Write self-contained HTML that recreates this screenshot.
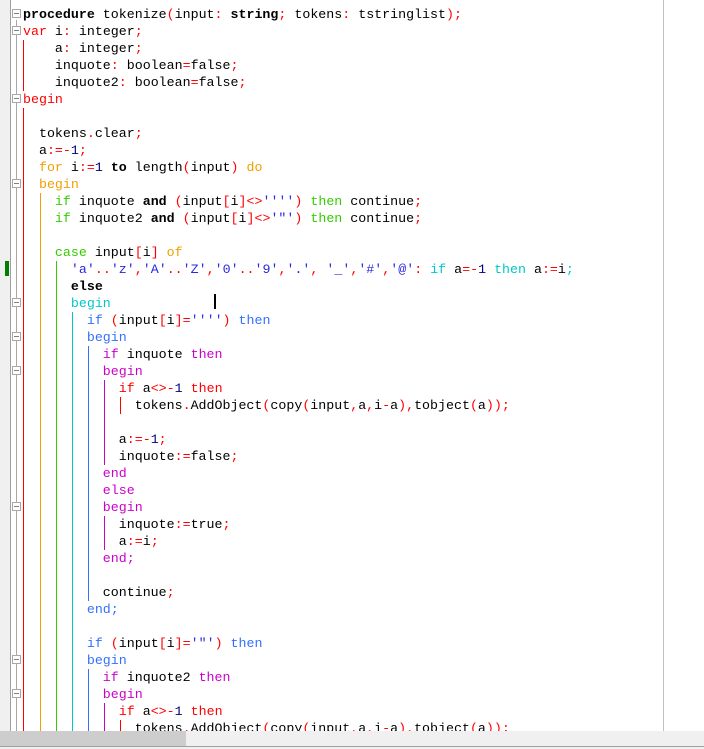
<!DOCTYPE html>
<html><head><meta charset="utf-8"><style>
html,body{margin:0;padding:0;background:#fff;width:704px;height:749px;overflow:hidden;position:relative}
.g{position:absolute;left:0;top:0;width:10px;height:731px;background:#f0f0f0;border-right:1px solid #a0a0a0}
.fl{position:absolute;left:16px;width:1px;background:#a8a8a8}
.fb{position:absolute;left:12px;width:7px;height:7px;border:1px solid #a8a8a8;background:#fff}
.fb:after{content:"";position:absolute;left:1px;top:3px;width:5px;height:1px;background:#808080}
.code{position:absolute;left:23px;top:6px;font-family:"Liberation Mono",monospace;font-size:13.3px;line-height:17px;white-space:pre;color:#000}
.v{position:absolute;width:1px}
.k{font-weight:bold}
.s{color:#ff0000}.n{color:#000080}.t{color:#2828e0}
.c1{color:#ff0000}.c2{color:#f0a000}.c3{color:#33cc00}.c4{color:#00c8c8}.c5{color:#3370ff}.c6{color:#cc00cc}.c7{color:#ff0000}
.sb{position:absolute;left:0;top:731px;width:704px;height:15px;background:#f0f0f0}
.th{position:absolute;left:0;top:731px;width:186px;height:15px;background:#cdcdcd}
</style></head><body>
<div class="g"></div>
<div style="position:absolute;left:5px;top:261px;width:4px;height:15px;background:#008000"></div>
<div class="fl" style="top:20px;height:711px"></div>
<div class="fb" style="top:9px"></div>
<div class="fb" style="top:26px"></div>
<div class="fb" style="top:94px"></div>
<div class="fb" style="top:179px"></div>
<div class="fb" style="top:298px"></div>
<div class="fb" style="top:332px"></div>
<div class="fb" style="top:366px"></div>
<div class="fb" style="top:502px"></div>
<div class="fb" style="top:655px"></div>
<div class="fb" style="top:689px"></div>
<div class="v" style="left:23px;top:40px;height:51px;background:#ff0000"></div>
<div class="v" style="left:23px;top:108px;height:623px;background:#ff0000"></div>
<div class="v" style="left:40px;top:193px;height:538px;background:#f0a000"></div>
<div class="v" style="left:56px;top:261px;height:470px;background:#33cc00"></div>
<div class="v" style="left:72px;top:312px;height:419px;background:#00c8c8"></div>
<div class="v" style="left:88px;top:346px;height:255px;background:#3370ff"></div>
<div class="v" style="left:88px;top:669px;height:62px;background:#3370ff"></div>
<div class="v" style="left:104px;top:380px;height:85px;background:#cc00cc"></div>
<div class="v" style="left:104px;top:516px;height:34px;background:#cc00cc"></div>
<div class="v" style="left:104px;top:703px;height:28px;background:#cc00cc"></div>
<div class="v" style="left:120px;top:397px;height:17px;background:#ff0000"></div>
<div class="v" style="left:120px;top:720px;height:11px;background:#ff0000"></div>
<div class="v" style="left:663px;top:0;height:731px;background:#c0c0c0"></div>
<div style="position:absolute;left:214px;top:294px;width:2px;height:15px;background:#000"></div>
<div class="code"><span class="k">procedure</span> tokenize<span class="s">(</span>input<span class="s">:</span> <span class="k">string</span><span class="s">;</span> tokens<span class="s">:</span> tstringlist<span class="s">);</span>
<span class="c1">var</span> i<span class="s">:</span> integer<span class="s">;</span>
    a<span class="s">:</span> integer<span class="s">;</span>
    inquote<span class="s">:</span> boolean<span class="s">=</span>false<span class="s">;</span>
    inquote2<span class="s">:</span> boolean<span class="s">=</span>false<span class="s">;</span>
<span class="c1">begin</span>

  tokens<span class="s">.</span>clear<span class="s">;</span>
  a<span class="s">:=-</span><span class="n">1</span><span class="s">;</span>
  <span class="c2">for</span> i<span class="s">:=</span><span class="n">1</span> <span class="k">to</span> length<span class="s">(</span>input<span class="s">)</span> <span class="c2">do</span>
  <span class="c2">begin</span>
    <span class="c3">if</span> inquote <span class="k">and</span> <span class="s">(</span>input<span class="s">[</span>i<span class="s">]&lt;&gt;</span><span class="t">''''</span><span class="s">)</span> <span class="c3">then</span> continue<span class="s">;</span>
    <span class="c3">if</span> inquote2 <span class="k">and</span> <span class="s">(</span>input<span class="s">[</span>i<span class="s">]&lt;&gt;</span><span class="t">'"'</span><span class="s">)</span> <span class="c3">then</span> continue<span class="s">;</span>

    <span class="c3">case</span> input<span class="s">[</span>i<span class="s">]</span> <span class="c2">of</span>
      <span class="t">'a'</span><span class="s">..</span><span class="t">'z'</span><span class="s">,</span><span class="t">'A'</span><span class="s">..</span><span class="t">'Z'</span><span class="s">,</span><span class="t">'0'</span><span class="s">..</span><span class="t">'9'</span><span class="s">,</span><span class="t">'.'</span><span class="s">,</span> <span class="t">'_'</span><span class="s">,</span><span class="t">'#'</span><span class="s">,</span><span class="t">'@'</span><span class="s">:</span> <span class="c4">if</span> a<span class="s">=-</span><span class="n">1</span> <span class="c4">then</span> a<span class="s">:=</span>i<span class="c4">;</span>
      <span class="k">else</span>
      <span class="c4">begin</span>
        <span class="c5">if</span> <span class="s">(</span>input<span class="s">[</span>i<span class="s">]=</span><span class="t">''''</span><span class="s">)</span> <span class="c5">then</span>
        <span class="c5">begin</span>
          <span class="c6">if</span> inquote <span class="c6">then</span>
          <span class="c6">begin</span>
            <span class="c7">if</span> a<span class="s">&lt;&gt;-</span><span class="n">1</span> <span class="c7">then</span>
              tokens<span class="s">.</span>AddObject<span class="s">(</span>copy<span class="s">(</span>input<span class="s">,</span>a<span class="s">,</span>i<span class="s">-</span>a<span class="s">),</span>tobject<span class="s">(</span>a<span class="s">));</span>

            a<span class="s">:=-</span><span class="n">1</span><span class="s">;</span>
            inquote<span class="s">:=</span>false<span class="s">;</span>
          <span class="c6">end</span>
          <span class="c6">else</span>
          <span class="c6">begin</span>
            inquote<span class="s">:=</span>true<span class="s">;</span>
            a<span class="s">:=</span>i<span class="s">;</span>
          <span class="c6">end;</span>

          continue<span class="s">;</span>
        <span class="c5">end;</span>

        <span class="c5">if</span> <span class="s">(</span>input<span class="s">[</span>i<span class="s">]=</span><span class="t">'"'</span><span class="s">)</span> <span class="c5">then</span>
        <span class="c5">begin</span>
          <span class="c6">if</span> inquote2 <span class="c6">then</span>
          <span class="c6">begin</span>
            <span class="c7">if</span> a<span class="s">&lt;&gt;-</span><span class="n">1</span> <span class="c7">then</span>
              tokens<span class="s">.</span>AddObject<span class="s">(</span>copy<span class="s">(</span>input<span class="s">,</span>a<span class="s">,</span>i<span class="s">-</span>a<span class="s">),</span>tobject<span class="s">(</span>a<span class="s">));</span></div>
<div class="sb"></div><div class="th"></div>
<div style="position:absolute;left:0;top:746px;width:704px;height:1px;background:#a0a0a0"></div>
<div style="position:absolute;left:0;top:747px;width:704px;height:2px;background:#f0f0f0"></div>
</body></html>
